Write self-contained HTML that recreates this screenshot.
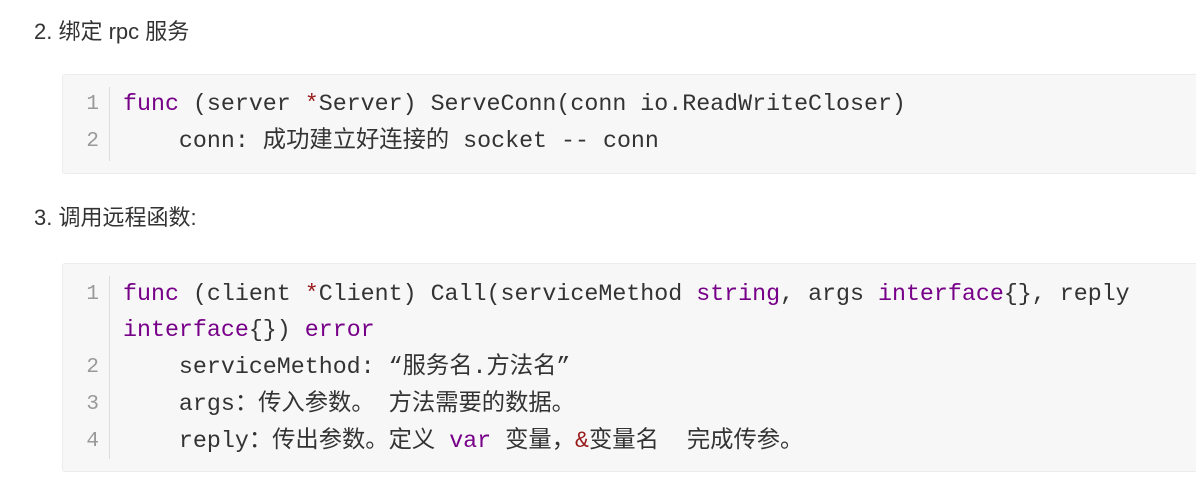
<!DOCTYPE html>
<html><head><meta charset="utf-8"><style>
body{margin:0;width:1196px;height:504px;background:#fff;overflow:hidden;font-family:"Liberation Sans","Noto Sans CJK SC",sans-serif;color:#333}
.h{position:absolute;left:34px;font-size:22px;line-height:30px}
.blk{position:absolute;left:62px;width:1140px;background:#f7f7f7;border:1px solid #ececec;border-radius:3px}
.ln{position:absolute;font-family:"Liberation Mono","Noto Sans CJK SC",monospace;font-size:23.3px;line-height:37px;white-space:pre;color:#333}
.n{position:absolute;left:16px;width:20px;text-align:right;color:#999;font-family:"Liberation Mono",monospace;font-size:21px;line-height:37px}
.g{position:absolute;left:46px;top:12px;bottom:12px;border-left:1px solid #ddd}
.k{color:#770088}.o{color:#981a1a}
</style></head><body>
<div class="h" style="top:17px">2. 绑定 rpc 服务</div>
<div class="blk" style="top:74px;height:98px">
<div class="g"></div>
<div class="n" style="top:11px">1</div><div class="n" style="top:48px">2</div>
<div class="ln" style="left:60px;top:11px"><span class="k">func</span> (server <span class="o">*</span>Server) ServeConn(conn io.ReadWriteCloser)</div>
<div class="ln" style="left:60px;top:48px">    conn: 成功建立好连接的 socket -- conn</div>
</div>
<div class="h" style="top:203px">3. 调用远程函数:</div>
<div class="blk" style="top:263px;height:207px">
<div class="g"></div>
<div class="n" style="top:12px">1</div><div class="n" style="top:85px">2</div><div class="n" style="top:122px">3</div><div class="n" style="top:159px">4</div>
<div class="ln" style="left:60px;top:12px"><span class="k">func</span> (client <span class="o">*</span>Client) Call(serviceMethod <span class="k">string</span>, args <span class="k">interface</span>{}, reply</div>
<div class="ln" style="left:60px;top:48px"><span class="k">interface</span>{}) <span class="k">error</span></div>
<div class="ln" style="left:60px;top:85px">    serviceMethod: “服务名.方法名”</div>
<div class="ln" style="left:60px;top:122px">    args：传入参数。 方法需要的数据。</div>
<div class="ln" style="left:60px;top:159px">    reply：传出参数。定义 <span class="k">var</span> 变量，<span class="o">&amp;</span>变量名  完成传参。</div>
</div>
</body></html>
